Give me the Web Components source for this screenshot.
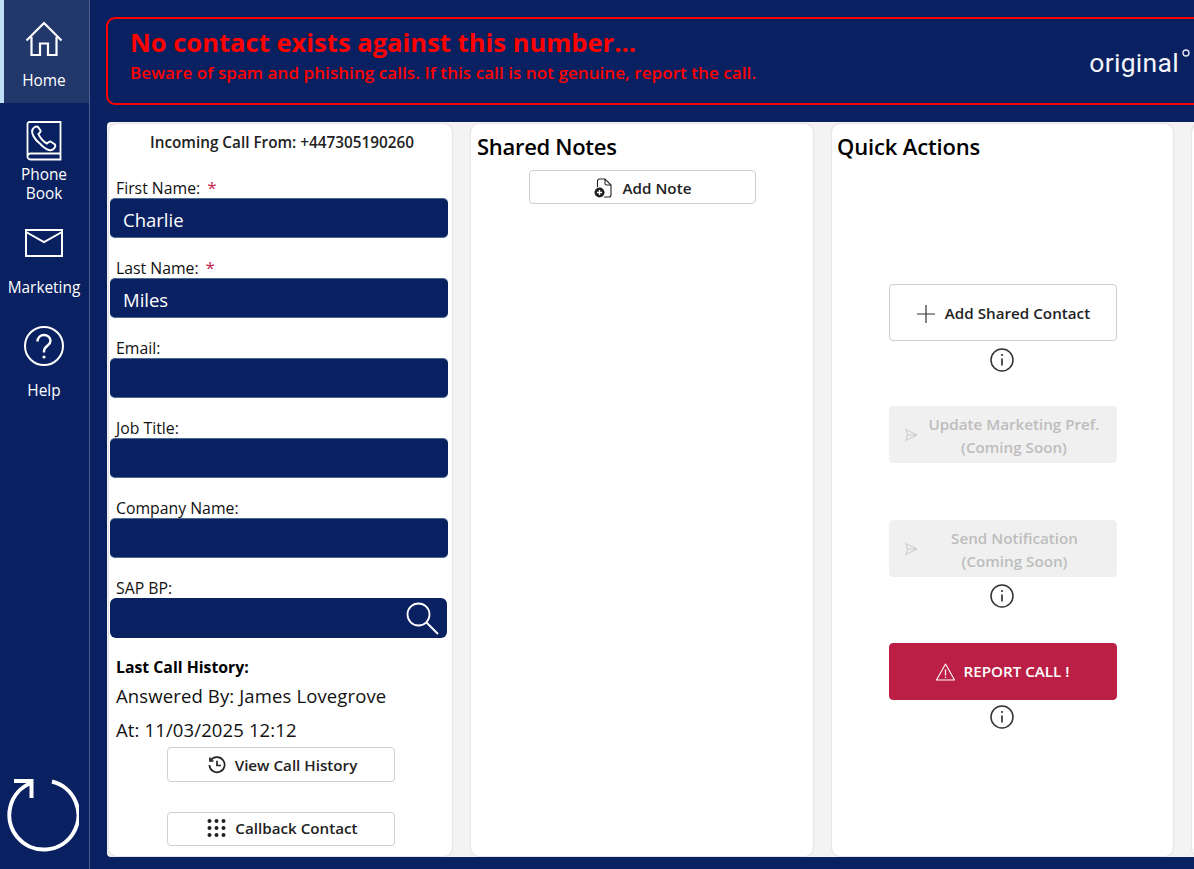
<!DOCTYPE html>
<html lang="en"><head><meta charset="utf-8"><title>Call</title>
<style>
html,body{margin:0;padding:0;height:100%;overflow:hidden;background:#0a2161}
body{font-family:"Open Sans","Noto Sans",sans-serif}
</style></head><body>
<app-shell></app-shell>
<script>
const FONT='"Open Sans","Noto Sans",sans-serif';
function def(name,css,html,init){
  customElements.define(name,class extends HTMLElement{
    connectedCallback(){
      if(this.shadowRoot)return;
      const r=this.attachShadow({mode:'open'});
      r.innerHTML='<style>'+css+'</style>'+(typeof html==='function'?html(this):html);
    }
  });
}
const ICONS={
home:'<svg width="38" height="36" viewBox="0 0 38 36" fill="none" stroke="#fff" stroke-width="2.2"><path d="M1.500 19.500 19 2l17.500 17.500M6.500 16V34H15V22.500H23V34H31.500V16"/></svg>',
book:'<svg width="36" height="40" viewBox="0 0 36 40" fill="none" stroke="#fff" stroke-width="1.800"><path d="M1.500 35V3a2 2 0 0 1 2-2H34.500V38.500H4.500a3 3 0 0 1-3-3.500a3 3 0 0 1 3-2.500H34.500"/><path stroke-width="2" d="M6.500 8.500c1.500-2.500 4-3.500 5.500-2.500l2.500 3.500c.6 1-1.500 3-2 3.500c1 3 5 8 8.500 9.500c1-.8 2.500-2.500 3.500-2l4.500 3c1 1.500-.5 4-2.500 5.200c-3 1.500-8.500-1-13-6.500C8.500 18.500 5 12 6.500 8.500Z"/></svg>',
mail:'<svg width="38" height="28" viewBox="0 0 38 28" fill="none" stroke="#fff" stroke-width="2"><rect x="1" y="1" width="36" height="26"/><path d="M1 3 19 13 37 3"/></svg>',
help:'<svg width="40" height="40" viewBox="0 0 40 40" fill="none" stroke="#fff" stroke-width="2"><circle cx="20" cy="20" r="19"/><path stroke-width="2.400" d="M13.500 15.500c0-4 3-6.500 6.500-6.500s6.500 2.500 6.500 6c0 4.500-6.500 5-6.500 10v1.500"/><circle cx="20" cy="31" r="1.600" fill="#fff" stroke="none"/></svg>',
refresh:'<svg width="74" height="74" viewBox="0 0 74 74" fill="none" stroke="#fff" stroke-width="4"><path d="M47 3.500A34.500 34.500 0 1 1 26 5"/><path d="M9 3H26.500V20"/></svg>',
search:'<svg width="34" height="34" viewBox="0 0 34 34" fill="none" stroke="#fff" stroke-width="1.800"><circle cx="13.500" cy="13.500" r="11"/><path d="M21.500 21.500 33 33" stroke-width="2"/></svg>',
history:'<svg width="18" height="18" viewBox="0 0 18 18" fill="none" stroke="#222" stroke-width="1.700"><path d="M2.600 4.600A7.600 7.600 0 1 1 1.400 9"/><path d="M2 1.500V5H5.500"/><path d="M9 4.800V9.500H13"/></svg>',
dots:'<svg width="19" height="18" viewBox="0 0 19 18" fill="#222"><circle cx="2.500" cy="2" r="2"/><circle cx="9.500" cy="2" r="2"/><circle cx="16.500" cy="2" r="2"/><circle cx="2.500" cy="9" r="2"/><circle cx="9.500" cy="9" r="2"/><circle cx="16.500" cy="9" r="2"/><circle cx="2.500" cy="16" r="2"/><circle cx="9.500" cy="16" r="2"/><circle cx="16.500" cy="16" r="2"/></svg>',
note:'<svg width="18" height="20" viewBox="0 0 18 20" fill="none" stroke="#222" stroke-width="1.100"><path d="M3.500 9V3a2 2 0 0 1 2-2H11l6 6v10a2 2 0 0 1-2 2H10"/><path d="M11 1v4.500a1.500 1.500 0 0 0 1.500 1.500H17"/><circle cx="5.500" cy="14.500" r="5" fill="#222" stroke="none"/><path d="M5.500 12v5M3 14.500h5" stroke="#fff" stroke-width="1.300"/></svg>',
plus:'<svg width="18" height="18" viewBox="0 0 18 18" fill="none" stroke="#333" stroke-width="1.200"><path d="M9 0V18M0 9H18"/></svg>',
send:'<svg width="13" height="13" viewBox="0 0 13 13" fill="none" stroke="#c8c8c8" stroke-width="1"><path d="M.8 1 12 6.500.8 12 2.500 6.500ZM2.500 6.500H12"/></svg>',
warn:'<svg width="19" height="18" viewBox="0 0 19 18" fill="none" stroke="#fff" stroke-width="1.100"><path d="M9.500 1 18.500 17H.5Z" stroke-linejoin="round"/><path d="M9.500 6.500v6M9.500 13.800v1.200" stroke-width="1.300"/></svg>'
};
def('nav-item',`
:host{display:flex;flex-direction:column;align-items:center;box-sizing:border-box;width:89px;color:#fff;font-size:15.400px;line-height:19px;text-align:center;position:relative}
:host([active]){background:#22376a}
:host([active])::before{content:"";position:absolute;left:0;top:0;bottom:0;width:4px;background:#bfe0f7}
.i{display:flex;align-items:center;justify-content:center;margin-left:-1px}
`,h=>`<div class="i" style="height:${h.getAttribute('ih')}px;margin-top:${h.getAttribute('it')}px">${ICONS[h.getAttribute('icon')]}</div><div style="margin-top:${h.getAttribute('lt')||0}px;margin-left:-1px"><slot></slot></div>`);
def('side-bar',`
:host{display:flex;flex-direction:column;box-sizing:border-box;width:90px;height:869px;border-right:1px solid #4a5c8c;background:#0a2161;font-family:${FONT}}
.sp{flex:1}
.r{display:flex;justify-content:center;padding:0 0 17px 0;margin-left:-6px}
`,`
<nav-item active icon="home" ih="36" it="21" lt="14" style="height:103px">Home</nav-item>
<nav-item icon="book" ih="40" it="18" lt="4" style="height:105px">Phone<br>Book</nav-item>
<nav-item icon="mail" ih="28" it="21" lt="21" style="height:103px;margin-top:0">Marketing</nav-item>
<nav-item icon="help" ih="40" it="15" lt="15" style="height:100px">Help</nav-item>
<div class="sp"></div><div class="r">${ICONS.refresh}</div>`);
def('alert-banner',`
:host{display:flex;box-sizing:border-box;height:88px;margin:17px -30px 0 16px;border:2px solid #f00;border-radius:9px;padding:8px 32px 0 22px;color:#f00;font-family:${FONT};justify-content:space-between}
h1{margin:0;font-size:25.500px;line-height:30px;font-weight:700;letter-spacing:.03px}
p{margin:4px 0 0;font-size:17px;line-height:24px;font-weight:600;letter-spacing:.07px}
.logo{display:flex;align-items:flex-start;color:#f2f4f9;font-family:Roboto,sans-serif;font-size:26.500px;font-weight:400;line-height:30px;margin-top:21px;letter-spacing:.3px}
.logo svg{margin:1px 0 0 3px}
`,`<div><h1>No contact exists against this number...</h1><p>Beware of spam and phishing calls. If this call is not genuine, report the call.</p></div>
<div class="logo"><span>original</span><svg width="8" height="8" viewBox="0 0 8 8" fill="none" stroke="#dfe4ee" stroke-width="1.400"><circle cx="4" cy="4" r="3"/></svg></div>`);
def('panel-card',`
:host{display:block;box-sizing:border-box;background:#fff;border-radius:8px;box-shadow:0 0 2px rgba(0,0,0,.2);height:732px;flex:none;color:#000;font-family:${FONT}}
`,`<slot></slot>`);
def('form-field',`
:host{display:flex;flex-direction:column;justify-content:flex-end;height:80px;margin-left:1px;box-sizing:border-box}
label{font-size:15.800px;line-height:20px;color:#111;padding-left:6px;display:block;margin-bottom:0}
label b{font-weight:400;color:#c4264a;margin-left:7px;font-size:17px}
.b{box-sizing:border-box;height:40px;width:338px;background:#0a2161;border-radius:5px;color:#fff;font-size:18.500px;display:flex;align-items:center;justify-content:space-between;padding:3px 8px 0 13px;border-top:1px solid #4a6a8f;border-bottom:1px solid #4a6a8f}
:host([search]) .b{border:0;width:337px;border-radius:6px;padding-top:0}
`,h=>`<label>${h.getAttribute('label')}${h.hasAttribute('req')?'<b>*</b>':''}</label><div class="b"><span><slot></slot></span>${h.hasAttribute('search')?ICONS.search:''}</div>`);
def('action-btn',`
:host{display:flex;box-sizing:border-box;align-items:center;justify-content:center;background:#fff;border:1px solid #cfcfcf;border-radius:4px;color:#222;font-size:15.200px;font-weight:600;font-family:${FONT};text-align:center;line-height:23px;position:relative;padding-top:2px}
:host([kind=disabled]){background:#f0f0f0;border-color:#f0f0f0;color:#bdbdbd}
:host([kind=danger]){background:#bc1f45;border-color:#bc1f45;color:#fff;padding-top:0}
.g{display:flex;align-items:center;justify-content:center}
.lead{position:absolute;left:15px;top:50%;transform:translateY(-50%);display:flex}
`,h=>{const ic=ICONS[h.getAttribute('icon')];
 if(h.getAttribute('kind')==='disabled')return `<span class="lead">${ic}</span><span style="margin-left:${h.getAttribute('ml')||0}px"><slot></slot></span>`;
 return `<div class="g" style="gap:${h.getAttribute('gap')||8}px">${ic}<span><slot></slot></span></div>`});
def('info-icon',`
:host{display:block;height:24px;width:24px;margin-left:-1px}
`,`<svg width="24" height="24" viewBox="0 0 24 24" fill="none" stroke="#333" stroke-width="1.500"><circle cx="12" cy="12" r="11"/><path d="M12 10.500V17.500" stroke-width="1.700"/><circle cx="12" cy="7" r="1.100" fill="#333" stroke="none"/></svg>`);
def('contact-panel',`
:host{display:block;font-family:${FONT};color:#000}
.t{text-align:center;font-size:15.300px;line-height:20px;font-weight:600;color:#222;padding-top:8px;padding-left:3px;height:26px}
.h{margin:19px 0 0 7px}
.hh{font-size:15.800px;font-weight:700;line-height:20px}
.l{font-size:18.500px;line-height:25px;letter-spacing:.13px;margin-top:6px;color:#111}
.l+.l{margin-top:9px}
.bs{display:flex;flex-direction:column;align-items:center;margin-top:5px;margin-left:1px}
action-btn{width:228px}
`,`<div class="t">Incoming Call From: +447305190260</div>
<div><form-field label="First Name:" req>Charlie</form-field>
<form-field label="Last Name:" req>Miles</form-field>
<form-field label="Email:"></form-field>
<form-field label="Job Title:"></form-field>
<form-field label="Company Name:"></form-field>
<form-field label="SAP BP:" search></form-field></div>
<div class="h"><div class="hh">Last Call History:</div><div class="l">Answered By: James Lovegrove</div><div class="l">At: 11/03/2025 12:12</div></div>
<div class="bs"><action-btn icon="history" gap="9" style="height:35px;padding:1px 0 0 3px">View Call History</action-btn><action-btn icon="dots" gap="9" style="height:34px;margin-top:30px;padding:0 0 2px 3px">Callback Contact</action-btn></div>`);
def('panel-title',`:host{display:block;font-size:22px;font-weight:600;line-height:30px;padding:7px 0 0 6px;letter-spacing:-.3px;color:#000;font-family:${FONT}}`,`<slot></slot>`);
def('quick-actions',`
:host{display:flex;flex-direction:column;align-items:center;font-family:${FONT};padding-left:0}
action-btn{width:228px;height:57px;flex:none}
info-icon{margin-top:7px;flex:none}
`,`<action-btn icon="plus" gap="10" style="margin-top:123px;height:57px;padding-left:2px">Add Shared Contact</action-btn><info-icon style="margin-top:7px"></info-icon>
<action-btn icon="send" kind="disabled" ml="23" style="margin-top:34px">Update Marketing Pref.<br>(Coming Soon)</action-btn>
<action-btn icon="send" kind="disabled" ml="24" style="margin-top:57px">Send Notification<br>(Coming Soon)</action-btn><info-icon></info-icon>
<action-btn icon="warn" kind="danger" gap="9" style="margin-top:35px">REPORT CALL !</action-btn><info-icon style="margin-top:5px"></info-icon>`);
def('app-shell',`
:host{display:flex;width:1194px;height:869px;overflow:hidden;background:#0a2161;font-family:${FONT}}
main{flex:1;min-width:0;display:flex;flex-direction:column}
.area{margin:17px 0 0 17px;background:#f3f3f3;height:735px;display:flex;gap:19px;padding:2px 0 0 2px;width:1087px;box-sizing:border-box;overflow:hidden;border-radius:4px 0 0 4px}
.nb{display:flex;justify-content:center;margin-top:9px;padding-left:1px}
.nbtn{width:227px;height:34px}
.q{margin-left:-1px;letter-spacing:-.15px}
`,`<side-bar></side-bar><main><alert-banner></alert-banner>
<div class="area">
<panel-card style="width:343px"><contact-panel></contact-panel></panel-card>
<panel-card style="width:342px"><panel-title>Shared Notes</panel-title><div class="nb"><action-btn class="nbtn" icon="note" gap="11">Add Note</action-btn></div></panel-card>
<panel-card style="width:341px"><panel-title class="q">Quick Actions</panel-title><quick-actions></quick-actions></panel-card>
<panel-card style="width:343px"></panel-card>
</div></main>`);
</script>
</body></html>
